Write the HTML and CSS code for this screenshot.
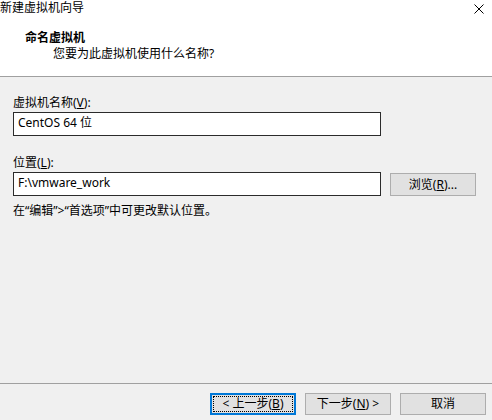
FILE: index.html
```html
<!DOCTYPE html>
<html lang="zh-CN">
<head>
<meta charset="utf-8">
<title>新建虚拟机向导</title>
<link rel="stylesheet" href="styles.css">
</head>
<body>
<div class="window">
  <div class="header">
    <div class="titlebar">
      <span class="title">新建虚拟机向导</span>
      <svg class="close" width="10" height="10" viewBox="0 0 10 10"><path d="M0.5 0.5 L9.5 9.5 M9.5 0.5 L0.5 9.5" stroke="#000" stroke-width="1" fill="none"/></svg>
    </div>
    <div class="heading">命名虚拟机</div>
    <div class="sub">您要为此虚拟机使用什么名称?</div>
  </div>
  <div class="content">
    <div class="label label-first">虚拟机名称(<u>V</u>):</div>
    <div class="field">CentOS 64 位</div>
    <div class="label label-second">位置(<u>L</u>):</div>
    <div class="row">
      <div class="field">F:\vmware_work</div>
      <div class="btn browse">浏览(<u>R</u>)...</div>
    </div>
    <div class="hint">在“编辑”&gt;“首选项”中可更改默认位置。</div>
  </div>
  <div class="footer">
    <div class="btn default"><span class="focus">&lt; 上一步(<u>B</u>)</span></div>
    <div class="btn">下一步(<u>N</u>) &gt;</div>
    <div class="btn">取消</div>
  </div>
</div>
</body>
</html>
```
FILE: styles.css
```css
html, body {
  margin: 0;
  padding: 0;
}
body {
  width: 492px;
  height: 420px;
  overflow: hidden;
  background: #f0f0f0;
  font-family: "Noto Sans", "Noto Sans CJK SC", sans-serif;
  font-size: 12px;
  color: #000;
}
u {
  text-decoration: underline;
  text-underline-offset: 1px;
}
.window {
  display: flex;
  flex-direction: column;
  height: 420px;
}
.header {
  background: #fff;
  height: 76px;
  border-bottom: 1px solid #a0a0a0;
  box-sizing: content-box;
}
.titlebar {
  display: flex;
  justify-content: space-between;
  align-items: flex-start;
  padding-top: 1px;
  height: 14px;
  line-height: 14px;
}
.close {
  margin-top: 3px;
  margin-right: 8px;
}
.heading {
  margin-top: 15px;
  padding-left: 25px;
  font-weight: bold;
  line-height: 14px;
  font-family: "Noto Sans CJK SC", sans-serif;
}
.sub {
  margin-top: 3px;
  padding-left: 53px;
  line-height: 14px;
}
.content {
  flex: 1;
  padding: 0 13px;
}
.label {
  line-height: 14px;
}
.label-first {
  margin-top: 19px;
}
.label-second {
  margin-top: 20px;
}
.field {
  margin-top: 2px;
  width: 368px;
  height: 24px;
  box-sizing: border-box;
  border: 1px solid #2b2b2b;
  background: #fff;
  padding: 0 4px;
  line-height: 20px;
}
.row {
  display: flex;
  align-items: flex-start;
  gap: 9px;
  margin-top: 2px;
}
.row .field {
  margin-top: 0;
}
.btn {
  width: 86px;
  height: 22px;
  box-sizing: border-box;
  background: #e1e1e1;
  border: 1px solid #adadad;
  display: flex;
  align-items: center;
  justify-content: center;
  line-height: 14px;
}
.browse {
  margin-top: 1px;
  height: 23px;
}
.hint {
  margin-top: 8px;
  line-height: 14px;
}
.footer {
  border-top: 1px solid #a0a0a0;
  height: 37px;
  box-sizing: border-box;
  padding: 9px 6px 0 0;
  display: flex;
  justify-content: flex-end;
  gap: 9px;
}
.default {
  border: 2px solid #0078d7;
  padding: 1px;
}
.default .focus {
  flex: 1;
  align-self: stretch;
  display: flex;
  align-items: center;
  justify-content: center;
  border: 1px dotted #000;
}
```
